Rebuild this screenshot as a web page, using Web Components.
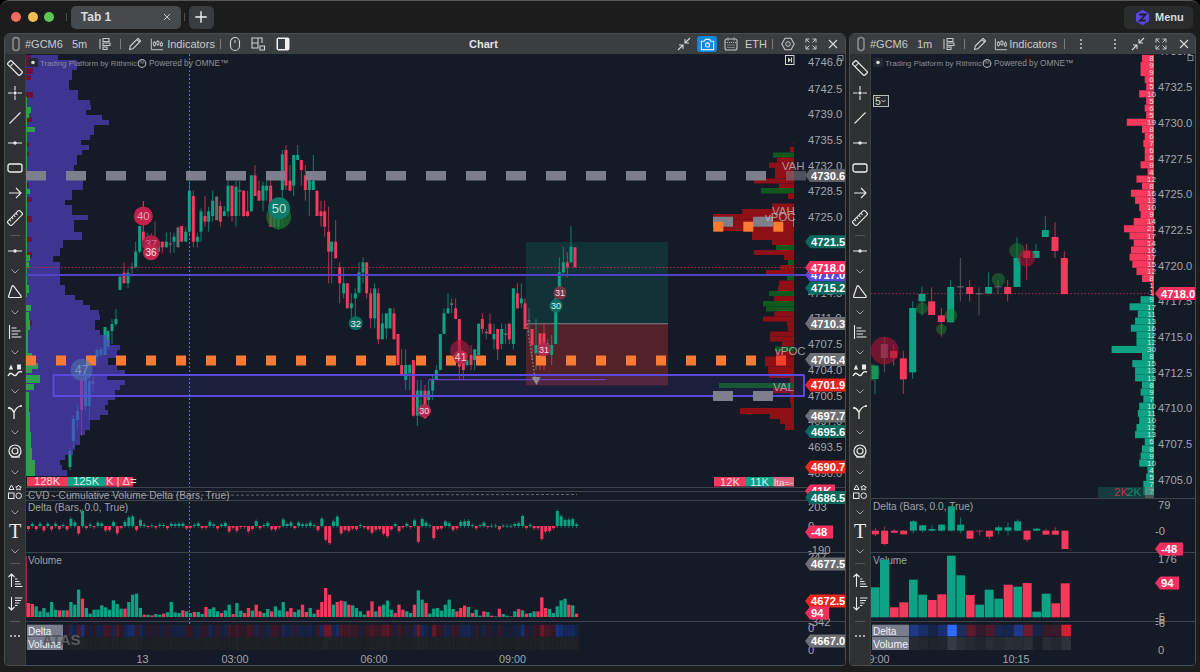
<!DOCTYPE html>
<html>
<head>
<meta charset="utf-8">
<title>Chart</title>
<style>
  html, body { margin: 0; height: 100%; background: #000; overflow: hidden; }
</style>
</head>
<body>
<app-window>
  <title-bar slot="top"></title-bar>

  <chart-panel style="width:842px;flex:none" title="Chart">
    <ui-icon slot="left" name="capsule" style="margin-left:1px"></ui-icon>
    <head-text slot="left" style="margin-left:1px">#GCM6</head-text>
    <head-text slot="left" style="margin-left:9px">5m</head-text>
    <ui-icon slot="left" name="bars" style="margin-left:10px"></ui-icon>
    <head-sep slot="left" style="margin-left:7px"></head-sep>
    <ui-icon slot="left" name="pen" style="margin-left:6px"></ui-icon>
    <ui-icon slot="left" name="indic" size="14" style="margin-left:7px"></ui-icon>
    <head-text slot="left" style="margin-left:3px">Indicators</head-text>
    <head-sep slot="left" style="margin-left:5px"></head-sep>
    <ui-icon slot="left" name="mouse" style="margin-left:6px"></ui-icon>
    <ui-icon slot="left" name="grid" style="margin-left:7px"></ui-icon>
    <ui-icon slot="left" name="half" style="margin-left:9px"></ui-icon>

    <ui-icon slot="right" name="shrink"></ui-icon>
    <cam-button slot="right" style="margin-left:5px"></cam-button>
    <ui-icon slot="right" name="cal" style="margin-left:6px"></ui-icon>
    <head-text slot="right" style="margin-left:6px">ETH</head-text>
    <head-sep slot="right" style="margin-left:5px"></head-sep>
    <ui-icon slot="right" name="gear" style="margin-left:7px"></ui-icon>
    <ui-icon slot="right" name="expand" style="margin-left:7px"></ui-icon>
    <ui-icon slot="right" name="close" style="margin-left:6px;margin-right:2px"></ui-icon>

    <tool-strip slot="tools"></tool-strip>
    <trade-chart kind="left"></trade-chart>
  </chart-panel>

  <chart-panel style="flex:1;margin-left:3px" title="">
    <ui-icon slot="left" name="capsule" style="margin-left:1px"></ui-icon>
    <head-text slot="left" style="margin-left:1px">#GCM6</head-text>
    <head-text slot="left" style="margin-left:9px">1m</head-text>
    <ui-icon slot="left" name="bars" style="margin-left:9px"></ui-icon>
    <head-sep slot="left" style="margin-left:7px"></head-sep>
    <ui-icon slot="left" name="pen" style="margin-left:7px"></ui-icon>
    <ui-icon slot="left" name="indic" size="14" style="margin-left:6px"></ui-icon>
    <head-text slot="left" style="margin-left:1px">Indicators</head-text>
    <head-sep slot="left" style="margin-left:7px"></head-sep>
    <ui-icon slot="left" name="dots" style="margin-left:8px"></ui-icon>

    <ui-icon slot="right" name="dots"></ui-icon>
    <ui-icon slot="right" name="shrink" style="margin-left:7px"></ui-icon>
    <ui-icon slot="right" name="expand" style="margin-left:7px"></ui-icon>
    <ui-icon slot="right" name="close" style="margin-left:7px;margin-right:1px"></ui-icon>

    <tool-strip slot="tools"></tool-strip>
    <trade-chart kind="right"></trade-chart>
  </chart-panel>
</app-window>

<script>
const FONT = '"Liberation Sans", Arial, sans-serif'

const ICONS = {
  capsule: '<rect x="5" y="1.5" width="6" height="13" rx="3" fill="none" stroke="#8d9093" stroke-width="1.5"/>',
  bars: '<path d="M3 3v10M6 2.5h6v3H6zM6 7h7v2.5H6zM6 11h4v2.5H6z" fill="none" stroke="#c4c6c8" stroke-width="1.1"/>',
  pen: '<path d="M2.5 13.5l.8-3.5L11 2.4l2.6 2.6L6 12.7zM9.8 3.6l2.6 2.6" fill="none" stroke="#d0d2d4" stroke-width="1.1" stroke-linejoin="round"/>',
  indic: '<path d="M1.5 2v12.5H15M5 5v6M9 3.5v6.5M13 5v6" fill="none" stroke="#c4c6c8" stroke-width="1.1"/><rect x="3.8" y="6" width="2.4" height="3.5" fill="#3a3e40" stroke="#c4c6c8"/><rect x="7.8" y="5" width="2.4" height="3.5" fill="#3a3e40" stroke="#c4c6c8"/><rect x="11.8" y="7" width="2.4" height="3" fill="#3a3e40" stroke="#c4c6c8"/>',
  mouse: '<rect x="3.5" y="1.5" width="9" height="13" rx="4.5" fill="none" stroke="#d0d2d4" stroke-width="1.1"/><path d="M8 4v3" stroke="#d0d2d4"/>',
  grid: '<path d="M2 2h6v5H2zM8 2h4v5M2 7v5h6V7M10 10h4.5v4H10z" fill="none" stroke="#d0d2d4" stroke-width="1.1"/>',
  half: '<rect x="1.5" y="1.5" width="13" height="13" rx="2" fill="#f0f0f0"/><rect x="3" y="3" width="7" height="10" fill="#3a3e40"/>',
  shrink: '<path d="M2 14l5-5M3 9h4v4M14 2L9 7M13 7H9V3" fill="none" stroke="#d6d8da" stroke-width="1.1"/>',
  cal: '<rect x="2" y="3" width="12" height="11" rx="2" fill="none" stroke="#c4c6c8" stroke-width="1.1"/><path d="M2 6.5h12M5 1.5v3M11 1.5v3M4.5 9h7M4.5 11.5h7" stroke="#c4c6c8" stroke-dasharray="1 1"/>',
  gear: '<path d="M5 2.2h6L14.2 8 11 13.8H5L1.8 8z" fill="none" stroke="#c4c6c8" stroke-width="1.1" stroke-linejoin="round"/><circle cx="8" cy="8" r="2.3" fill="none" stroke="#c4c6c8"/>',
  expand: '<path d="M3 3l3.5 3.5M3 6.5V3h3.5M13 3L9.5 6.5M9.5 3H13v3.5M3 13l3.5-3.5M3 9.5V13h3.5M13 13L9.5 9.5M13 9.5V13H9.5" fill="none" stroke="#c4c6c8"/>',
  close: '<path d="M4 4l8 8M12 4l-8 8" stroke="#d6d8da" stroke-width="1.2"/>',
  dots: '<circle cx="8" cy="4" r="1" fill="#c4c6c8"/><circle cx="8" cy="8" r="1" fill="#c4c6c8"/><circle cx="8" cy="12" r="1" fill="#c4c6c8"/>',
  plus: '<path d="M8 1.5v13M1.5 8h13" stroke="#f2f2f2" stroke-width="1.6"/>',
  // left toolbar
  ruler2: '<g transform="rotate(45 8 8)"><rect x="-.5" y="5.4" width="17" height="5.2" rx="1.2" fill="none" stroke="#e8e8e8" stroke-width="1.2"/><path d="M3.5 5.4v5.2" stroke="#e8e8e8"/></g>',
  cross: '<path d="M8 1v4.5M8 10.5V15M1 8h4.5M10.5 8H15" stroke="#e8e8e8" stroke-width="1.1"/><path d="M8 6l2 2-2 2-2-2z" fill="#e8e8e8"/>',
  line: '<path d="M2.5 13.5l11-11" stroke="#e8e8e8" stroke-width="1.1"/>',
  hline: '<path d="M1 8h14" stroke="#e8e8e8" stroke-width="1.1"/><circle cx="8" cy="8" r="1.7" fill="#e8e8e8"/>',
  rect: '<rect x="1" y="4" width="14" height="8" rx="2" fill="none" stroke="#f0f0f0" stroke-width="1.3"/>',
  arrow: '<path d="M2 8h12M9 3l5 5-5 5" fill="none" stroke="#e8e8e8" stroke-width="1.1"/>',
  ruler: '<g transform="rotate(-45 8 8)"><rect x="-.5" y="5.2" width="17" height="5.6" rx="1" fill="none" stroke="#e8e8e8" stroke-width="1.1"/><path d="M3 5.2v2.4M6 5.2v2.4M9 5.2v2.4M12 5.2v2.4" stroke="#e8e8e8"/></g>',
  chev: '<path d="M4.5 6.5L8 10l3.5-3.5" fill="none" stroke="#a0a2a4" stroke-width="1"/>',
  tri: '<path d="M5 2.2c.5-.7 1.2-.6 1.7-.1l7.3 9.8c.5.8.2 1.6-.8 1.6H2.6c-.8 0-1.2-.5-1-1.3z" fill="none" stroke="#e8e8e8" stroke-width="1.2"/>',
  levels: '<path d="M2.5 1v14M4.5 4h5M4.5 7h9M4.5 10h6.5M4.5 13h10" stroke="#e8e8e8" stroke-width="1.1" fill="none"/>',
  wave: '<path d="M4 1.5L1.8 6.5h4.4zM10 1.5h4v5h-4z" fill="#e8e8e8"/><path d="M1 13c2-4 3.5-3 5-1.5s3 1.5 4-.5 3-3 5-2" fill="none" stroke="#f2f2f2" stroke-width="1.4"/>',
  branch: '<path d="M2 3.5c2 .5 4 3 5 5 1-3 3-5.5 6.5-6.5M7 8.5V15" fill="none" stroke="#f0f0f0" stroke-width="1.3"/><circle cx="2" cy="4" r="1.1" fill="#f0f0f0"/><circle cx="14" cy="2" r="1.1" fill="#f0f0f0"/>',
  magnet: '<circle cx="8" cy="7" r="6" fill="none" stroke="#e8e8e8" stroke-width="1.2"/><circle cx="8" cy="7" r="3" fill="none" stroke="#e8e8e8" stroke-width="1.2"/><path d="M4 13h9" stroke="#e8e8e8" stroke-width="1.2"/>',
  shapes: '<path d="M4.5 1L7 5.5H2zM11.5 1l1 1.7 1.8.3-1.3 1.3.3 1.7-1.8-.8-1.800.8.3-1.7L8.700 3l1.8-.3z" fill="none" stroke="#e8e8e8"/><rect x="1.5" y="9" width="5.5" height="5.5" fill="none" stroke="#e8e8e8"/><circle cx="11.7" cy="11.7" r="2.8" fill="none" stroke="#e8e8e8"/>',
  sortup: '<path d="M4.5 15V2M1.5 5l3-3 3 3M8 7h2.5M8 9.5h4.5M8 12h6M8 14.5h7.5" fill="none" stroke="#e8e8e8" stroke-width="1.1"/>',
  sortdn: '<path d="M4.5 1v13M1.5 11l3 3 3-3M8 2h7.5M8 4.5h6M8 7h4.5M8 9.5h2.5" fill="none" stroke="#e8e8e8" stroke-width="1.1"/>',
  more: '<circle cx="4" cy="8" r=".9" fill="#e8e8e8"/><circle cx="8" cy="8" r=".9" fill="#e8e8e8"/><circle cx="12" cy="8" r=".9" fill="#e8e8e8"/>',
  logo: '<path d="M8 .8l6.2 3.6v7.2L8 15.2 1.8 11.6V4.4z" fill="#5b45e0"/><path d="M5 5.2h6L5.6 10.8h5.4" fill="none" stroke="#1e1e2a" stroke-width="1.7"/>'
}

class UiIcon extends HTMLElement {
  connectedCallback() {
    const size = this.getAttribute("size") || 16
    const shadow = this.shadowRoot || this.attachShadow({ mode: "open" })
    shadow.innerHTML = `<style>:host{display:inline-flex;flex:none;width:${size}px;height:${size}px}</style>
      <svg width="${size}" height="${size}" viewBox="0 0 16 16">${ICONS[this.getAttribute("name")] || ""}</svg>`
  }
}
customElements.define("ui-icon", UiIcon)

class HeadText extends HTMLElement {
  constructor() {
    super()
    this.attachShadow({ mode: "open" }).innerHTML = `<style>
      :host{display:inline-block;font:11px ${FONT};color:#c8cacc;white-space:nowrap;flex:none}
    </style><slot></slot>`
  }
}
customElements.define("head-text", HeadText)

class HeadSep extends HTMLElement {
  constructor() {
    super()
    this.attachShadow({ mode: "open" }).innerHTML = `<style>
      :host{display:inline-block;width:1px;height:10px;background:#7c7f82;flex:none}
    </style>`
  }
}
customElements.define("head-sep", HeadSep)

class CamButton extends HTMLElement {
  constructor() {
    super()
    this.attachShadow({ mode: "open" }).innerHTML = `<style>
      :host{display:inline-flex;align-items:center;justify-content:center;width:20px;height:16px;background:#1188e0;border-radius:3px;flex:none}
    </style>
    <svg width="15" height="15" viewBox="0 0 16 16"><path d="M1.5 4.5h3l1.2-2h4.6l1.2 2h3v9h-13z" fill="none" stroke="#dff0ff" stroke-width="1.2"/><circle cx="8" cy="8.5" r="2.2" fill="none" stroke="#dff0ff" stroke-width="1.2"/></svg>`
  }
}
customElements.define("cam-button", CamButton)

const winTemplate = document.createElement("template")
winTemplate.innerHTML = `
  <style>
    :host {
      display: flex; flex-direction: column; box-sizing: border-box;
      width: 1200px; height: 672px; background: #1c1c1c;
      border-top: 1px solid #56585a; border-radius: 9px 9px 0 0; overflow: hidden;
    }
    .panels { flex: 1; display: flex; padding: 0 4px 6px 4px; min-height: 0; }
  </style>
  <slot name="top"></slot>
  <div class="panels"><slot></slot></div>
`
class AppWindow extends HTMLElement {
  constructor() {
    super()
    this.attachShadow({ mode: "open" }).append(winTemplate.content.cloneNode(true))
  }
}
customElements.define("app-window", AppWindow)

const barTemplate = document.createElement("template")
barTemplate.innerHTML = `
  <style>
    :host { display: flex; align-items: center; height: 32px; flex: none; padding: 0 7px 0 11px; font-family: ${FONT}; }
    .dot { width: 10px; height: 10px; border-radius: 50%; margin-right: 6.6px; }
    .sep { width: 1px; height: 8px; background: #4a4c4e; }
    .tab { display: flex; align-items: center; justify-content: space-between; box-sizing: border-box; width: 110px; height: 23px; margin-left: 4px; padding: 0 8px 0 10px; background: #474a4c; border-radius: 5px; color: #dcdcdc; font-size: 12px; font-weight: bold; }
    .plus { display: flex; align-items: center; justify-content: center; width: 25px; height: 23px; margin-left: 4px; background: #3a3d3f; border-radius: 5px; }
    .menu { margin-left: auto; display: flex; align-items: center; gap: 4px; height: 23px; width: 69px; box-sizing: border-box; padding-left: 10px; background: #2a2c2e; border-radius: 5px; color: #dcdcdc; font-size: 11px; font-weight: bold; }
  </style>
  <span class="dot" style="background:#ee6a5f"></span>
  <span class="dot" style="background:#f5bd4f"></span>
  <span class="dot" style="background:#61c554"></span>
  <span class="sep" style="margin-left:5px"></span>
  <div class="tab">Tab 1 <ui-icon name="close" size="12"></ui-icon></div>
  <span class="sep" style="margin-left:3px"></span>
  <div class="plus"><ui-icon name="plus" size="14"></ui-icon></div>
  <div class="menu"><ui-icon name="logo" size="17"></ui-icon>Menu</div>
`
class TitleBar extends HTMLElement {
  constructor() {
    super()
    this.attachShadow({ mode: "open" }).append(barTemplate.content.cloneNode(true))
  }
}
customElements.define("title-bar", TitleBar)

const panelTemplate = document.createElement("template")
panelTemplate.innerHTML = `
  <style>
    :host {
      display: flex; flex-direction: column; box-sizing: border-box; min-width: 0;
      background: #141a26; border: 1px solid #4b4e51; border-radius: 6px 6px 4px 4px; overflow: hidden;
    }
    header { display: flex; align-items: center; height: 20px; flex: none; background: #3a3e40; padding: 0 2px; font: bold 11px ${FONT}; color: #e2e2e2; }
    .group { display: flex; align-items: center; flex: none; }
    .title { flex: 1; text-align: center; }
    .body { flex: 1; display: flex; min-height: 0; }
  </style>
  <header>
    <div class="group"><slot name="left"></slot></div>
    <div class="title"></div>
    <div class="group"><slot name="right"></slot></div>
  </header>
  <div class="body"><slot name="tools"></slot><slot></slot></div>
`
class ChartPanel extends HTMLElement {
  constructor() {
    super()
    const shadow = this.attachShadow({ mode: "open" })
    shadow.append(panelTemplate.content.cloneNode(true))
    shadow.querySelector(".title").textContent = this.getAttribute("title") || ""
    this.removeAttribute("title")
  }
}
customElements.define("chart-panel", ChartPanel)

// name, cell height
const TOOLS = [
  ["gap", 1], ["ruler2", 25], ["cross", 25], ["line", 25], ["hline", 25], ["rect", 25], ["arrow", 25], ["ruler", 25],
  ["sep", 10], ["hline", 22], ["chev", 18], ["tri", 24], ["chev", 16], ["levels", 24], ["chev", 15],
  ["wave", 24], ["chev", 16], ["branch", 26], ["chev", 14], ["magnet", 26], ["chev", 14], ["shapes", 26], ["chev", 13],
  ["T", 26], ["chev", 14], ["sep", 10], ["sortup", 24], ["sortdn", 24], ["sep", 10], ["more", 20]
]

class ToolStrip extends HTMLElement {
  constructor() {
    super()
    const cells = TOOLS.map(([name, h]) => {
      if (name === "gap") return `<i style="height:${h}px"></i>`
      if (name === "sep") return `<div class="cell" style="height:${h}px"><b></b></div>`
      if (name === "T") return `<div class="cell t" style="height:${h}px">T</div>`
      return `<div class="cell" style="height:${h}px"><ui-icon name="${name}"></ui-icon></div>`
    }).join("")
    this.attachShadow({ mode: "open" }).innerHTML = `<style>
      :host { display: flex; flex-direction: column; box-sizing: border-box; flex: none; width: 21px; background: #2e3132; border-right: 1px solid #3c3f41; overflow: hidden; }
      .cell { display: flex; align-items: center; justify-content: center; flex: none; }
      i { display: block; flex: none; }
      b { display: block; width: 10px; height: 1px; background: #55585a; }
      .t { font: 20px "Liberation Serif", serif; color: #ececec; }
    </style>${cells}`
  }
}
customElements.define("tool-strip", ToolStrip)

// ---- chart drawing helpers, all coordinates are page pixels
const GREEN = "#0ca283", RED = "#f5385c", GRAY = "#6b6d72"
const colorOf = c => c === "g" ? GREEN : c === "r" ? RED : GRAY

function seeded(n) {
  let s = n
  return () => (s = (s * 16807) % 2147483647) / 2147483647
}
const R = (x, y, w, h, fill, extra = "") => `<rect x="${x}" y="${y}" width="${w}" height="${h}" fill="${fill}" ${extra}/>`
const L = (x1, y1, x2, y2, stroke, extra = "") => `<line x1="${x1}" y1="${y1}" x2="${x2}" y2="${y2}" stroke="${stroke}" ${extra}/>`
const C = (x, y, r, fill, extra = "") => `<circle cx="${x}" cy="${y}" r="${r}" fill="${fill}" ${extra}/>`
const T = (x, y, s, fill = "#a4a6ab", size = 11.2, extra = "") => `<text x="${x}" y="${y}" fill="${fill}" font-size="${size}" ${extra}>${s}</text>`

function tag(x, y, w, fill, s) {
  return `<polygon points="${x},${y} ${x + 5},${y - 6.5} ${x + w},${y - 6.5} ${x + w},${y + 6.5} ${x + 5},${y + 6.5}" fill="${fill}"/>` +
    T(x + 6, y + 4, s, "#fff", 11.2, 'font-weight="bold"')
}
function bubble(x, y, r, fill, s, color = "#fff", size = 9.5, alpha = 1) {
  return C(x, y, r, fill, `fill-opacity="${alpha}"`) + T(x, y + size * .36, s, color, size, 'text-anchor="middle"')
}
function candle(x, top, bot, wt, wb, c, bw) {
  const col = colorOf(c)
  return L(x, wt, x, wb, col, 'stroke-opacity=".75"') + R(x - bw / 2, top, bw, Math.max(bot - top, 1), col)
}

// candles: [x, top, bottom, wickTop, wickBottom, colour] read off in page pixels
const LEFT_A = [
  [70,451,467,448,470,"g"],[73.3,419,441,415,448,"g"],[77.6,411,420,405,430,"g"],[81.6,380,410,379,436,"r"],
  [85.6,379,406,372,410,"g"],[89.3,381,406,375,420,"g"],[93,381,384,374,392,"x"],[97,350,357,347,364,"g"],
  [101,349,355,347,356,"g"],[105,327,355,327,355,"g"],[108,331,347,330,350,"g"],[112,324,331,319,344,"g"],[116,319,324,309,326,"g"]
]
// x-offset 100, y-offset 140, scale 3
const LEFT_B = `60 410 450 400 450 g,72 398 430 368 430 r,84 398 430 388 445 g,96 380 385 368 410 x,107 335 382 305 385 g,119 258 335 258 340 g,130 275 305 183 320 r,142 305 330 278 330 x,154 310 320 280 350 r,165 310 320 245 340 x,176 305 335 305 335 g,187 305 322 305 340 r,199 305 322 278 322 g,211 310 314 275 340 x,222 290 305 278 338 g,234 262 322 260 322 x,245 258 305 258 305 r,257 275 305 262 305 g,268 152 275 122 290 g,280 168 305 152 322 r,292 290 305 278 322 g,303 214 275 205 305 g,315 228 245 168 260 r,326 214 245 200 275 g,338 182 228 152 245 g,350 170 240 168 242 x,361 198 245 182 260 r,373 214 228 198 228 g,384 137 214 122 230 g,396 137 228 137 245 r,408 140 228 122 260 g,419 150 155 122 228 x,431 152 228 152 230 r,443 214 228 152 230 r,454 106 214 106 214 g,465 106 168 75 168 r,477 152 182 122 182 r,489 137 182 125 214 g,500 137 152 122 182 g,512 137 260 122 260 r,523 225 260 200 262 x,535 225 260 200 270 g,547 43 150 30 260 g,558 30 137 15 150 r,570 122 152 75 152 r,581 45 137 45 168 g,593 45 60 15 60 g,604 60 90 60 137 r,616 106 150 75 182 r,628 122 150 122 228 g,640 122 150 45 150 g,651 152 228 152 228 r,663 214 228 182 260 r,674 214 260 182 290 r,686 275 335 200 430 r`
// x-offset 330, y-offset 220, scale 3
const LEFT_C = `5 65 95 65 190 g,17 65 115 0 115 r,29 142 190 127 250 r,41 190 220 142 235 g,52 190 265 190 265 r,64 250 265 220 310 g,76 220 235 205 295 g,87 157 218 127 220 g,99 127 157 112 190 g,110 127 220 127 235 r,122 220 295 205 325 r,134 205 295 190 325 g,145 220 358 205 372 r,157 310 358 280 358 g,169 280 325 280 358 g,180 265 325 265 325 g,192 280 358 265 358 r,204 342 435 342 435 r,215 435 465 388 465 r,227 435 480 388 510 g,239 435 460 432 510 g,250 420 587 420 590 r,262 512 587 480 618 g,273 512 527 480 570 g,285 512 595 495 595 r,296 512 540 480 570 g,308 480 512 465 540 g,319 450 480 435 480 g,331 342 450 342 450 g,342 280 342 265 342 g,354 265 280 220 280 g,365 250 255 235 280 x,377 265 297 235 297 r,388 297 440 297 480 r,400 420 450 400 480 r,411 420 435 415 440 g,423 405 435 375 450 r,434 388 420 388 450 g,446 311 405 311 405 g,457 297 327 280 342 r,469 335 340 327 358 x,480 311 342 280 342 r,492 342 358 311 388 g,503 327 388 327 420 r,515 327 372 310 388 g,527 340 345 311 372 x,538 311 358 311 372 r,550 205 372 205 388 g,562 220 265 190 265 r,574 235 250 190 265 g,585 250 327 235 327 r,597 300 305 265 340 x,606 327 375 327 420 r,618 375 400 297 450 g,630 340 400 340 450 r,642 340 400 311 450 r,653 370 375 358 400 x,665 375 405 345 435 g,677 235 372 235 372 g,688 157 235 112 235 g,700 127 157 80 170 g,712 127 142 97 172 r,723 80 127 18 127 g,735 82 142 82 142 r`

function parseCandles(str, ox, oy) {
  return str.split(",").map(s => {
    const p = s.split(" ")
    return [ox + p[0] / 3, oy + p[1] / 3, oy + p[2] / 3, oy + p[3] / 3, oy + p[4] / 3, p[5]]
  })
}

// volume profile: [rowTop, rightEdge]
const PROFILE = [[55,58],[60,77],[70,72],[80,69],[90,78],[100,90],[105,91],[110,86],[115,102],[120,109],[125,94],[135,90],[140,81],[145,89],[150,82],[155,77],[165,74],[175,83],[190,72],[200,65],[205,72],[215,88],[220,74],[232,82],[240,63],[248,60],[256,53],[262,60],[275,60],[285,65],[295,75],[300,83],[305,90],[310,99],[315,100],[320,95],[330,100],[335,107],[340,110],[345,120],[350,117],[355,118],[358,108],[365,117],[370,125],[375,107],[380,125],[385,120],[390,115],[400,108],[405,105],[410,108],[415,100],[420,90],[425,90],[430,85],[435,80],[445,75],[450,73],[455,65],[460,60],[465,62],[470,67]]
function leftProfile() {
  let out = ""
  PROFILE.forEach(([y, x], i) => {
    const next = PROFILE[i + 1] ? PROFILE[i + 1][0] : 476
    out += R(26, y, x - 26, next - y, "#5542cd", 'fill-opacity=".65"')
  })
  return out
}
function leftEdge() {
  let out = ""
  const maroon = [[55,5,12],[68,7,6],[75,5,5],[92,7,6],[117,6,5],[143,3,4],[152,3,4],[183,3,4],[197,6,5],[216,6,6],[237,6,5],[252,6,6],[320,6,6]]
  const green = [[97,1,200],[107,5,6],[113,3,5],[127,9,5],[189,4,5],[255,4,6],[262,3,6],[285,3,8],[305,5,6],[312,3,8],[320,4,10],[330,2,30],[353,6,4],[363,12,6],[369,6,4],[375,14,5],[379,14,4],[384,8,6],[392,3,20],[412,4,20],[432,5,16],[448,6,12],[460,9,16]]
  maroon.forEach(([y, w, h]) => out += R(26, y, w, h, "#6a1239"))
  green.forEach(([y, w, h]) => out += R(26, y, w, h, "#2f9e4f"))
  return out
}
// right-side session profile: [y0, y1, leftX, colour]
const SESSION = [[143,144,793,"r"],[147,152.5,790,"r"],[152.5,157.5,773,"g"],[157.5,162.5,777,"r"],[162.5,168,769,"r"],[168,178.5,775,"r"],[178.5,183.5,754,"r"],[183.5,188,779,"r"],[188,193.5,761,"g"],[193.5,199,788,"r"],[203.5,209,772,"r"],[209,214,742,"r"],[214,219.5,713,"r"],[219.5,231,713,"r"],[231,240,752,"r"],[240,245,772,"r"],[245,250,776,"g"],[250,255,754,"r"],[255,260,784,"r"],[260,265,788,"g"],[265,270,780,"r"],[270,275.5,766,"r"],[275.5,280.5,787,"g"],[280.5,286,779,"r"],[286,291,778,"r"],[291,296,769,"g"],[296,301,774,"r"],[301,306.5,763,"g"],[306.5,311.5,766,"g"],[311.5,316.5,774,"r"],[316.5,321.5,763,"r"],[321.5,326.5,787,"r"],[326.5,331.5,788,"r"],[331.5,336.5,770,"r"],[336.5,341.5,770,"r"],[341.5,346.5,782,"r"],[346.5,351.5,775,"g"],[351.5,356.5,776,"r"],[356.5,366.5,765,"r"],[366.5,373,768,"r"],[373,378,769,"r"],[378,383,790,"r"],[383,388,719,"g"],[388,393,773,"r"],[393,398,790,"r"],[398,403,790,"r"],[403,408,791,"r"],[408,414,740,"r"],[414,419,770,"r"],[419,424,780,"r"],[424,430,785,"r"]]

function tradeLeft() {
  let s = ""
  // position tool
  s += R(526, 242, 142, 81.3, "#0e6e64", 'fill-opacity=".3"')
  s += R(526, 323.3, 142, 62, "#a02a2c", 'fill-opacity=".45"')
  s += R(526, 323, 142, 1.3, "#6a6c6e")
  // candles
  const all = LEFT_A.concat(parseCandles(LEFT_B, 100, 140), parseCandles(LEFT_C, 330, 220))
  all.forEach(c => s += candle(c[0], c[1], c[2], c[3], c[4], c[5], 3))
  s += leftProfile() + leftEdge()
  // session profile
  SESSION.forEach(([a, b, x, c]) => s += R(x, a, 794 - x, b - a, c === "r" ? "#8e0f16" : "#0e5a1e"))
  // value area box and lines
  s += R(53.5, 375, 750, 21, "#5a49dd", 'fill-opacity=".12"')
  s += `<path d="M804 375H53.5V396H804V375" fill="none" stroke="#5a49dd" stroke-width="2"/>`
  s += L(429, 379.7, 606, 379.7, "#6a3fc0", 'stroke-width="1.3"')
  s += L(26, 267.5, 806, 267.5, "#b02a4a", 'stroke-dasharray="1.5 2"')
  s += L(26, 275, 806, 275, "#4f44c8", 'stroke-width="1.8"')
  s += L(189.5, 54, 189.5, 650, "#4f78c8", 'stroke-dasharray="2 2"')
  // dotted arrow of the trade tool
  s += L(527, 324, 535, 378, "#8a8c90", 'stroke-dasharray="1.5 2" stroke-width="1.2"')
  s += `<polygon points="531.5,377 540.5,377 536.5,385" fill="#8a8c90"/>`
  // session level dashes
  for (let x = 26; x < 800; x += 40) s += R(x, 171, 20, 9.5, "#7d7f8c", x > 780 ? 'fill-opacity=".55"' : "")
  ;[713, 753].forEach(x => {
    s += R(x, 216.7, 20, 10, "#7d7f8c")
    s += R(x, 391, 20, 10, "#7d7f8c")
  })
  s += R(793, 216.7, 1, 10, "#7d7f8c")
  ;[713.3, 743.3, 773.3].forEach(x => s += R(x, 221.7, 10, 10, "#fb7a32"))
  for (let x = 26; x < 790; x += 30) s += R(x, 355.5, 10, 10, x > 770 ? "#f5402a" : "#fb7a32")
  // bubbles
  s += L(143.3, 201, 143.3, 230, RED, 'stroke-opacity=".6"')
  s += bubble(143.3, 216, 9.5, "#c41f4a", "40", "#eaa0b4", 11.5)
  s += bubble(151, 244, 9, "#a81f45", "37", "#d86c8c", 11)
  s += bubble(151, 252.3, 8, "#c42650", "36", "#f4e6ea", 10)
  s += C(278.7, 216.7, 12.5, "#1c7030", 'fill-opacity=".75"')
  s += bubble(279, 208.3, 11, "#0c7c6c", "50", "#bfe4da", 13)
  s += bubble(81.7, 369.7, 11, "#4e7bb0", "47", "#7f96bc", 12, .55)
  s += bubble(355.7, 323.3, 7, "#0c6b60", "32", "#e8f4f0")
  s += C(460, 350, 10, "#a81c3e", 'fill-opacity=".65"')
  s += bubble(460.7, 357.3, 7, "#b5294f", "41", "#f0c8d2", 10.5)
  s += bubble(560, 293, 6.7, "#7a3346", "31", "#eedfe3", 9)
  s += bubble(556, 305.7, 6.7, "#0e6b62", "30", "#dff2ec", 9)
  s += bubble(544, 349.3, 6.7, "#b5294f", "31", "#f5dfe5", 9)
  s += bubble(424.3, 410.7, 6.7, "#b5294f", "30", "#f5dfe5", 9)
  // labels over the session profile
  const lab = 'fill-opacity=".75"'
  s += T(781.7, 170, "VAH", "#c4c4c8", 11.5, lab)
  s += T(772, 215, "VAH", "#c4c4c8", 11.5, lab)
  s += T(765, 221, "vPOC", "#c4c4c8", 11.5, lab)
  s += T(775, 355, "vPOC", "#c4c4c8", 11.5, lab)
  s += T(773, 391, "VAL", "#c4c4c8", 11.5, lab)
  s += watermark(28)
  s += `<rect x="785.5" y="55.5" width="8.5" height="9" fill="#141a26" stroke="#d8d8d8"/><path d="M788 57.5l3 2.5-3 2.5z" fill="#d8d8d8"/><path d="M791.5 57.5v5" stroke="#d8d8d8"/>`
  s += `<rect x="838" y="55.5" width="5" height="5" fill="none" stroke="#888a8c"/>`
  // profile footers
  s += R(27, 477, 40, 9.5, RED) + T(34, 485, "128K", "#f8d8e0", 11.2)
  s += R(67, 477, 39, 9.5, GREEN) + T(73, 485, "125K", "#d8f0ea", 11.2)
  s += R(106, 477, 27, 9.5, RED) + T(106, 485, "K | Δ=", "#f8d8e0", 11.2)
  s += R(714, 477, 31, 9.5, RED) + T(720, 485.5, "12K", "#f8d8e0", 11.2)
  s += R(745, 477, 28, 9.5, GREEN) + T(750, 485.5, "11K", "#d8f0ea", 11.2)
  s += R(773, 477, 21, 9.5, "#e0647e") + T(774, 485.5, "lta=-", "#f8d8e0", 9.8)
  // pane dividers
  ;[487, 491, 500, 552, 621].forEach(y => s += L(26, y + .5, 845, y + .5, "#3f434b", 'stroke-width="1.2"'))
  s += L(26, 495.5, 577, 494.5, "#7a7d82", 'stroke-dasharray="3 2" stroke-width=".8"')
  s += T(28, 499, "CVD - Cumulative Volume Delta (Bars, True)", "#a0a2a8", 10.2)
  s += T(28, 511, "Delta (Bars, 0.0, True)", "#a0a2a8", 10.2)
  s += T(28, 564, "Volume", "#a0a2a8", 10.2)
  s += L(26.5, 556, 26.5, 617, "#a81f40")
  // volume, delta, heat map
  s += lowerPanes(all)
  s += R(27, 624.7, 36, 12, "#7a7d8b") + T(28, 634.5, "Delta", "#f2f2f4", 10)
  s += R(27, 637, 36, 13, "#7a7d8b") + T(28, 647.5, "Volume", "#f2f2f4", 10)
  s += T(42, 645, "ATAS", "#565a60", 15, 'font-weight="bold"')
  // axis
  const axis = [["4746.0",62],["4742.5",88.7],["4739.0",114],["4735.5",139.6],["4732.0",165.6],["4728.5",191],["4725.0",216.7],["4714.5",293],["4711.0",318],["4707.5",344],["4704.0",370],["4700.5",396],["4697.0",421],["4693.5",447],["4690.0",473],["203",507],["0",526],["-190",550],["247",557],["-342",622],["0",628],["0",650]]
  axis.forEach(([t, y]) => s += T(808, y + 4, t))
  s += tag(805, 175.5, 45, "#5f6168", "4730.6")
  s += tag(805, 241.7, 45, "#066a5e", "4721.5")
  s += tag(805, 275, 45, "#5a49dd", "4717.0")
  s += tag(805, 267.5, 45, "#f2305f", "4718.0")
  s += tag(805, 288, 45, "#066a5e", "4715.2")
  s += tag(805, 323.5, 45, "#6d6f72", "4710.3")
  s += tag(805, 359.5, 45, "#6d6f72", "4705.4")
  s += tag(805, 385, 45, "#e8261f", "4701.9")
  s += tag(805, 416, 45, "#6d6f72", "4697.7")
  s += tag(805, 431.5, 45, "#066a5e", "4695.6")
  s += tag(805, 467, 45, "#e8261f", "4690.7")
  s += tag(805, 491, 30, "#f2305f", "41K")
  s += tag(805, 497.5, 45, "#066a5e", "4686.5")
  s += tag(805, 532, 28, "#f2305f", "-48")
  s += tag(805, 564, 45, "#6d6f72", "4677.5")
  s += tag(805, 601, 45, "#e8261f", "4672.5")
  s += tag(805, 613, 24, "#f2305f", "94")
  s += tag(805, 641, 45, "#6d6f72", "4667.0")
  // time scale
  ;[["13",142.5],["03:00",235],["06:00",374],["09:00",512.5]].forEach(([t, x]) => s += T(x, 663, t, "#a4a6ab", 10.8, 'text-anchor="middle"'))
  return s
}

function watermark(x) {
  return R(x, 58, 10, 9, "#232a36") + C(x + 5, 62.5, 1.8, "#d8d8d8") +
    T(x + 12, 66, "Trading Platform by Rithmic™", "#8a8d94", 7.9) +
    C(x + 114, 63.5, 3.8, "none", 'stroke="#a8aaae" stroke-width="1.2"') +
    T(x + 121, 66, "Powered by OMNE™", "#8f9298", 8.3)
}

// bar tops measured along the volume pane, y-offset 448, scale 3
const VOL_TOPS = [465,468,475,490,480,493,462,485,487,487,487,462,470,425,452,480,497,485,485,472,478,485,457,468,482,482,462,440,437,480,500,500,502,498,500,497,493,462,493,495,487,490,495,492,492,498,477,483,478,490,495,487,470,498,465,488,495,480,488,470,490,495,483,490,475,487,462,490,480,492,485,470,492,480,497,485,462,420,440,470,462,458,460,470,472,480,490,500,488,460,490,475,470,458,485,495,470,
  485,490,495,470,427,455,465,497,482,480,488,470,455,483,490,480,473,477,495,485,503,490,492,503,505,482,498,503,505,490,483,487,497,495,490,490,448,480,483,495,475,457,452,470,472,497]

function lowerPanes(candles) {
  const rnd = seeded(77)
  let s = "", step = 3.86
  VOL_TOPS.forEach((top, i) => {
    const x = 26.8 + i * step
    const mid = x + 1.8
    const near = candles.find(c => Math.abs(c[0] - mid) < 2)
    const up = near ? near[5] !== "r" : rnd() > .35
    const col = up ? GREEN : RED
    const y = 448 + top / 3
    s += R(x, y, 3.3, 617 - y, col)
    // delta bar, mixed sign, with the few long bars pinned
    const pinned = { 14: [15, true], 78: [17, false], 105: [12, false], 133: [13, false], 137: [15, true], 128: [10, true] }[i]
    const h = pinned ? pinned[0] : (617 - y) * (.15 + rnd() * .5)
    const bodyUp = pinned ? pinned[1] : rnd() > .52
    const dcol = bodyUp ? GREEN : RED
    s += L(mid - .2, bodyUp ? 526 - h - 2 : 526, mid - .2, bodyUp ? 528 : 526 + h + 2, dcol, 'stroke-opacity=".6"')
    s += R(x + .2, bodyUp ? 526 - h : 526, 3, Math.max(h, .8), dcol)
    // heat map cells
    const a = Math.min(1, h / 13)
    const heat = bodyUp ? `rgb(22,${Math.round(30 + a * 20)},${Math.round(52 + a * 75)})` : `rgb(${Math.round(38 + a * 70)},24,38)`
    s += R(x, 624.7, step + .1, 12, heat)
    const g = Math.round(28 + ((617 - y) / 70) * 14)
    s += R(x, 637, step + .1, 13, `rgb(${g},${g + 3},${g + 8})`)
  })
  return s
}

// 1m chart, x-offset 850, y-offset 224, scale 3
const RIGHT = `75 425 465 425 510 g,103 360 402 340 445 x,131 381 402 360 425 r,160 403 466 380 510 r,188 252 445 232 465 g,216 210 232 188 275 g,245 232 273 190 273 r,274 274 294 252 338 r,302 189 295 168 295 g,331 187 190 102 232 x,359 189 210 168 232 r,387 208 210 190 274 x,416 189 209 145 209 g,444 187 190 168 210 x,473 189 210 168 232 r,501 102 189 40 189 g,530 81 102 60 167 r,558 81 102 60 102 g,586 18 39 -25 39 g,615 39 81 -5 102 r,643 102 210 82 210 r`
const RIGHT_VOL = [[63,89,418,"g"],[90,118,335,"g"],[119,146,478,"r"],[148,175,463,"r"],[177,203,395,"g"],[205,231,440,"g"],[233,260,456,"r"],[262,289,439,"r"],[291,317,323,"g"],[319,345,382,"g"],[347,374,441,"r"],[376,402,470,"g"],[404,431,425,"g"],[433,459,452,"g"],[461,488,410,"r"],[490,516,416,"g"],[518,545,405,"r"],[547,573,491,"g"],[575,602,437,"g"],[604,630,466,"r"],[632,659,406,"r"]]
const RIGHT_DELTA = [[76,248,259,240,265,"r"],[104,248,288,236,292,"r"],[133,248,254,244,256,"r"],[161,248,259,246,260,"r"],[190,220,248,216,256,"g"],[218,232,248,230,254,"g"],[246,243,248,232,250,"g"],[275,230,248,228,250,"g"],[304,175,248,172,250,"g"],[332,230,248,208,255,"g"],[360,248,272,248,272,"r"],[389,248,250,248,262,"r"],[418,248,266,248,274,"r"],[446,238,248,232,260,"g"],[474,238,248,224,262,"g"],[503,220,248,214,250,"g"],[531,248,275,248,282,"r"],[560,242,248,240,250,"g"],[588,248,260,242,260,"r"],[616,248,260,238,260,"r"],[645,248,303,248,303,"r"]]
const HEAT_D = ["#1f3a86","#1a2d66","#172449","#1b2f6a","#2f6bff","#1c2c5f","#5e1a2b","#34192a","#4c1a2c","#182650","#18264f","#1e3a86","#6b1b2b","#172346","#391a2b","#3a1a2b","#d3202f"]
const HEAT_V = ["#262a33","#22262f","#1f232c","#20242d","#363a44","#2a2e37","#262a33","#20242d","#282c35","#252932","#2a2e37","#282c35","#2b2f38","#1b1f28","#282c35","#23272f","#2e323b"]
const ROWS = [8,9,9,6,5,10,5,6,5,19,8,6,7,6,6,9,4,12,8,16,13,10,9,14,21,17,14,16,17,15,12,8,1,1]
const ROWS_UP = [9,17,11,13,16,12,12,30,8,15,13,13,8,9,7,10,11,10,12,13,6,8,9,10,4,5,7,7]

function tradeRight() {
  let s = ""
  const sx = z => 850 + z / 3, sy = z => 224 + z / 3, vy = z => 448 + z / 3
  // footprint profile
  ROWS.concat(ROWS_UP).forEach((v, i) => {
    const y = 54.8 + i * 7.1, h = Math.min(7.1, 498 - y), w = v * 1.38 + 1
    s += R(1154 - w, y, w, h, i < ROWS.length ? RED : GREEN)
    s += T(1151.5, y + 6.2, v, "#fff", 8, `text-anchor="middle" fill-opacity=".8"`)
  })
  s += R(1098, 487, 47, 11, "#15584f", 'fill-opacity=".55"') + R(1145, 487, 9, 11, "#7a8a8a", 'fill-opacity=".55"')
  s += T(1114, 496, "2K", "#c0304f", 11.5) + T(1127, 496, "2K", "#0d8a76", 11.5)
  s += L(871, 293.7, 1155, 293.7, "#b02a4a", 'stroke-dasharray="1.5 2"')
  // candles
  parseCandles(RIGHT, 850, 224).forEach(c => s += candle(c[0], c[1], c[2], c[3], c[4], c[5], 7))
  const redCircle = (x, y, r) => C(sx(x), sy(y), r / 3, "#a81437", 'fill-opacity=".62"')
  const greenCircle = (x, y, r) => C(sx(x), sy(y), r / 3, "#1e8232", 'fill-opacity=".5"')
  s += greenCircle(64, 445, 25) + redCircle(104, 380, 42)
  s += greenCircle(216, 253, 18) + greenCircle(274, 316, 16) + greenCircle(303, 274, 19) + greenCircle(445, 167, 20) + greenCircle(501, 80, 23) + redCircle(530, 102, 26)
  s += watermark(873)
  s += `<rect x="873.5" y="95.5" width="15" height="11" fill="#232833" stroke="#b8babc"/>`
  s += T(875, 105, "5", "#d8d8d8", 10.5) + `<path d="M881.5 100l2 2 2-2" fill="none" stroke="#d8d8d8" stroke-width=".9"/>`
  s += `<rect x="1188" y="55.5" width="5" height="5" fill="none" stroke="#888a8c"/>`
  // panes
  ;[498, 552, 621].forEach(y => s += L(871, y + .5, 1196, y + .5, "#3f434b", 'stroke-width="1.2"'))
  s += T(873, 510, "Delta (Bars, 0.0, True)", "#a0a2a8", 10.2)
  s += T(873, 564, "Volume", "#a0a2a8", 10.2)
  RIGHT_DELTA.forEach(d => {
    const col = colorOf(d[5])
    s += L(sx(d[0]), vy(d[3]), sx(d[0]), vy(d[4]), col, 'stroke-opacity=".7"')
    s += R(sx(d[0]) - 3.5, vy(d[1]), 7, (d[2] - d[1]) / 3, col)
  })
  RIGHT_VOL.forEach(v => s += R(sx(v[0]), vy(v[2]), (v[1] - v[0]) / 3, (508 - v[2]) / 3, colorOf(v[3])))
  HEAT_D.forEach((c, i) => {
    s += R(sx(178) + i * 9.5, 624.7, 9.6, 11.7, c)
    s += R(sx(178) + i * 9.5, 637, 9.6, 13, HEAT_V[i])
  })
  s += R(872, 624.7, 37, 11.7, "#7a7d8b") + T(873, 634.5, "Delta", "#f2f2f4", 10)
  s += R(872, 637, 37, 13, "#7a7d8b") + T(873, 647.5, "Volume", "#f2f2f4", 10.5)
  // axis
  const axis = [["4735.0",51],["4732.5",87],["4730.0",122.7],["4727.5",158.7],["4725.0",194],["4722.5",230],["4720.0",265.5],["4717.5",301],["4715.0",337],["4712.5",372.5],["4710.0",408],["4707.5",444],["4705.0",479.5],["79",505],["-0",531],["176",559],["-5",617],["-5",620],["-6",623],["0",650]]
  axis.forEach(([t, y]) => s += T(t.length < 3 && t !== "79" && t !== "0" ? 1155 : 1158, y + 4, t))
  s += tag(1155, 293.5, 42, "#f2305f", "4718.0")
  s += tag(1155, 549, 28, "#f2305f", "-48")
  s += tag(1155, 583, 24, "#f2305f", "94")
  s += T(879, 663, "9:00", "#a4a6ab", 10.8, 'text-anchor="middle"')
  s += T(1016, 663, "10:15", "#a4a6ab", 10.8, 'text-anchor="middle"')
  return s
}

class TradeChart extends HTMLElement {
  connectedCallback() {
    const left = this.getAttribute("kind") === "left"
    const ox = left ? 26 : 871, oy = 54
    const shadow = this.shadowRoot || this.attachShadow({ mode: "open" })
    shadow.innerHTML = `<style>
      :host { display: block; flex: 1; min-width: 0; position: relative; background: #141a26; overflow: hidden; }
      svg { display: block; width: 100%; height: 100%; font-family: ${FONT}; }
    </style>
    <svg><g transform="translate(${-ox} ${-oy})">${left ? tradeLeft() : tradeRight()}</g></svg>`
  }
}
customElements.define("trade-chart", TradeChart)
</script>
</body>
</html>
